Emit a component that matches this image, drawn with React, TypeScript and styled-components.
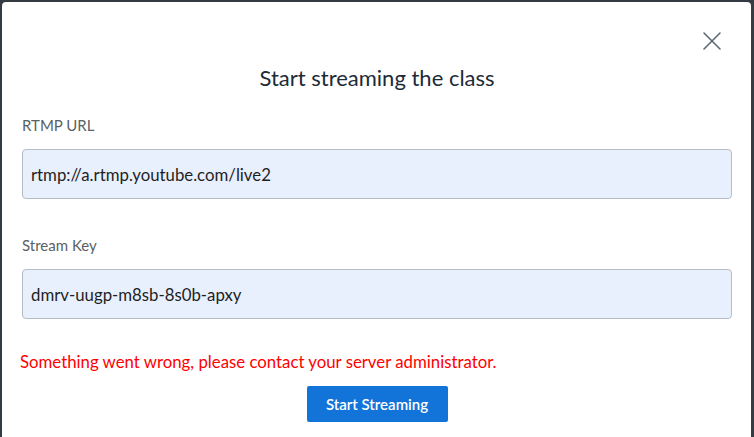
import React from "react";
import styled, { createGlobalStyle } from "styled-components";

const Global = createGlobalStyle`
  html, body { margin: 0; padding: 0; }
  body {
    background: #343b43;
    font-family: "Source Sans Pro", "Lato", "Noto Sans", sans-serif;
    overflow: hidden;
  }
`;

const Backdrop = styled.div`
  width: 754px;
  height: 437px;
  background: #343b43;
  box-sizing: border-box;
  padding: 2px 3px 0 2px;
  overflow: hidden;
`;

const Modal = styled.div`
  background: #ffffff;
  border-radius: 4px 4px 0 0;
  height: 460px;
  box-sizing: border-box;
  padding: 28px 19px 0 20px;
  display: flex;
  flex-direction: column;
`;

const Header = styled.div`
  display: flex;
  justify-content: flex-end;
  padding-right: 9px;
`;

const CloseButton = styled.button`
  width: 22px;
  height: 22px;
  padding: 0;
  border: none;
  background: transparent;
  display: flex;
  align-items: center;
  justify-content: center;
  cursor: pointer;
`;

const Title = styled.h2`
  margin: 11px 0 0;
  text-align: center;
  font-size: 22px;
  line-height: 30px;
  font-weight: 400;
  color: #1d2a38;
`;

const Field = styled.div<{ $top: number }>`
  display: flex;
  flex-direction: column;
  margin-top: ${(p) => p.$top}px;
`;

const Label = styled.label`
  font-size: 15px;
  line-height: 20px;
  color: #5a5f66;
  margin-bottom: 14px;
`;

const Input = styled.input`
  height: 50px;
  box-sizing: border-box;
  border: 1px solid #b5bcc6;
  border-radius: 4px;
  background: #e8f0fe;
  padding: 0 8px;
  font-family: inherit;
  font-size: 16.8px;
  color: #1f1f1f;
  outline: none;
`;

const ErrorText = styled.p`
  margin: 32px 0 0 -2px;
  font-size: 16.8px;
  line-height: 22px;
  color: #ff0000;
`;

const Actions = styled.div`
  display: flex;
  justify-content: center;
  margin-top: 13px;
`;

const PrimaryButton = styled.button`
  height: 36px;
  width: 141px;
  border: none;
  border-radius: 2px;
  background: #1273d8;
  color: #ffffff;
  font-family: inherit;
  font-size: 15px;
  font-weight: 600;
  cursor: pointer;
`;

const CloseIcon = () => (
  <svg width="20" height="20" viewBox="0 0 20 20" fill="none">
    <path d="M2 2 L18 18 M18 2 L2 18" stroke="#5d6874" strokeWidth="1.6" strokeLinecap="round" />
  </svg>
);

export default function App() {
  return (
    <>
      <Global />
      <Backdrop>
        <Modal>
          <Header>
            <CloseButton aria-label="Close">
              <CloseIcon />
            </CloseButton>
          </Header>
          <Title>Start streaming the class</Title>
          <Field $top={22}>
            <Label>RTMP URL</Label>
            <Input readOnly value="rtmp://a.rtmp.youtube.com/live2" />
          </Field>
          <Field $top={36}>
            <Label>Stream Key</Label>
            <Input readOnly value="dmrv-uugp-m8sb-8s0b-apxy" />
          </Field>
          <ErrorText>Something went wrong, please contact your server administrator.</ErrorText>
          <Actions>
            <PrimaryButton>Start Streaming</PrimaryButton>
          </Actions>
        </Modal>
      </Backdrop>
    </>
  );
}
